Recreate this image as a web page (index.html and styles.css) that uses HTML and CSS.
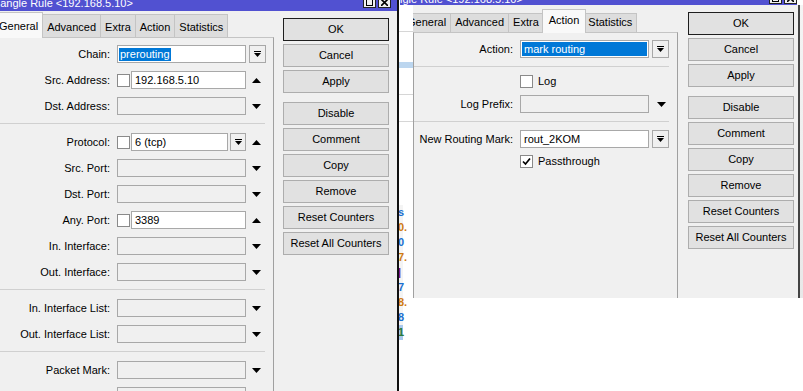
FILE: index.html
```html
<!DOCTYPE html>
<html lang="en">
<head>
  <meta charset="UTF-8" />
  <title>Mangle Rule &lt;192.168.5.10&gt;</title>
  <link rel="stylesheet" href="styles.css">
</head>
<body>
  <div class="screen">

    <!-- left window, General tab -->
    <div class="win win-left">
      <div class="titlebar">
        <span class="title">Mangle Rule &lt;192.168.5.10&gt;</span>
        <div class="tb-btns">
          <span class="tb-btn"><svg width="7" height="7" viewBox="0 0 7 7"><rect x="0.5" y="0.5" width="6" height="6" fill="none" stroke="#000"/></svg></span>
          <span class="tb-btn"><svg width="7" height="7" viewBox="0 0 7 7"><path d="M0 0L7 7M7 0L0 7" stroke="#000" stroke-width="1.6"/></svg></span>
        </div>
      </div>
      <div class="win-body">
        <div class="tabbox">
          <div class="tabs">
            <div class="tab active">General</div>
            <div class="tab">Advanced</div>
            <div class="tab">Extra</div>
            <div class="tab">Action</div>
            <div class="tab">Statistics</div>
          </div>
          <div class="panel">
            <div class="row">
              <div class="label">Chain:</div>
              <div class="ctrl"><div class="field on"><span class="sel">prerouting</span></div></div>
              <div class="aux"><div class="drop"><svg width="7" height="7" viewBox="0 0 7 7"><path d="M0 0h7v1H0zM0 2h7L3.5 6z"/></svg></div></div>
            </div>
            <div class="row">
              <div class="label">Src. Address:</div>
              <div class="ctrl"><span class="check"></span><div class="field on">192.168.5.10</div></div>
              <div class="aux"><svg width="9" height="5" viewBox="0 0 9 5"><path d="M4.5 0L9 5H0z"/></svg></div>
            </div>
            <div class="row">
              <div class="label">Dst. Address:</div>
              <div class="ctrl"><div class="field"></div></div>
              <div class="aux"><svg width="9" height="5" viewBox="0 0 9 5"><path d="M0 0h9L4.5 5z"/></svg></div>
            </div>
            <div class="sep"></div>
            <div class="row">
              <div class="label">Protocol:</div>
              <div class="ctrl">
                <span class="check"></span><div class="field on">6 (tcp)</div>
                <div class="drop"><svg width="7" height="7" viewBox="0 0 7 7"><path d="M0 0h7v1H0zM0 2h7L3.5 6z"/></svg></div>
              </div>
              <div class="aux"><svg width="9" height="5" viewBox="0 0 9 5"><path d="M4.5 0L9 5H0z"/></svg></div>
            </div>
            <div class="row">
              <div class="label">Src. Port:</div>
              <div class="ctrl"><div class="field"></div></div>
              <div class="aux"><svg width="9" height="5" viewBox="0 0 9 5"><path d="M0 0h9L4.5 5z"/></svg></div>
            </div>
            <div class="row">
              <div class="label">Dst. Port:</div>
              <div class="ctrl"><div class="field"></div></div>
              <div class="aux"><svg width="9" height="5" viewBox="0 0 9 5"><path d="M0 0h9L4.5 5z"/></svg></div>
            </div>
            <div class="row">
              <div class="label">Any. Port:</div>
              <div class="ctrl"><span class="check"></span><div class="field on">3389</div></div>
              <div class="aux"><svg width="9" height="5" viewBox="0 0 9 5"><path d="M4.5 0L9 5H0z"/></svg></div>
            </div>
            <div class="row">
              <div class="label">In. Interface:</div>
              <div class="ctrl"><div class="field"></div></div>
              <div class="aux"><svg width="9" height="5" viewBox="0 0 9 5"><path d="M0 0h9L4.5 5z"/></svg></div>
            </div>
            <div class="row">
              <div class="label">Out. Interface:</div>
              <div class="ctrl"><div class="field"></div></div>
              <div class="aux"><svg width="9" height="5" viewBox="0 0 9 5"><path d="M0 0h9L4.5 5z"/></svg></div>
            </div>
            <div class="sep"></div>
            <div class="row">
              <div class="label">In. Interface List:</div>
              <div class="ctrl"><div class="field"></div></div>
              <div class="aux"><svg width="9" height="5" viewBox="0 0 9 5"><path d="M0 0h9L4.5 5z"/></svg></div>
            </div>
            <div class="row">
              <div class="label">Out. Interface List:</div>
              <div class="ctrl"><div class="field"></div></div>
              <div class="aux"><svg width="9" height="5" viewBox="0 0 9 5"><path d="M0 0h9L4.5 5z"/></svg></div>
            </div>
            <div class="sep"></div>
            <div class="row">
              <div class="label">Packet Mark:</div>
              <div class="ctrl"><div class="field"></div></div>
              <div class="aux"><svg width="9" height="5" viewBox="0 0 9 5"><path d="M0 0h9L4.5 5z"/></svg></div>
            </div>
            <div class="row">
              <div class="label"></div>
              <div class="ctrl"><div class="field"></div></div>
            </div>
          </div>
        </div>
        <div class="buttons">
          <div class="btn default">OK</div>
          <div class="btn">Cancel</div>
          <div class="btn">Apply</div>
          <div class="btn group">Disable</div>
          <div class="btn">Comment</div>
          <div class="btn">Copy</div>
          <div class="btn">Remove</div>
          <div class="btn">Reset Counters</div>
          <div class="btn">Reset All Counters</div>
        </div>
      </div>
    </div>

    <div class="edge"></div>

    <!-- right window, Action tab -->
    <div class="right-area">
      <div class="titlebar title-right">
        <span class="title">Mangle Rule &lt;192.168.5.10&gt;</span>
        <div class="tb-btns">
          <span class="tb-btn"><svg width="7" height="7" viewBox="0 0 7 7"><rect x="0.5" y="0.5" width="6" height="6" fill="none" stroke="#000"/></svg></span>
          <span class="tb-btn"><svg width="7" height="7" viewBox="0 0 7 7"><path d="M0 0L7 7M7 0L0 7" stroke="#000" stroke-width="1.6"/></svg></span>
        </div>
      </div>
      <div class="right-row">
        <div class="behind">
          <div class="bh-line"></div>
          <div class="bh-sel"></div>
          <div class="bh-line"></div>
          <div class="bh-line"></div>
          <div class="bh-list">
            <span class="c1">s</span>
            <span class="c2">0.</span>
            <span class="c1">0</span>
            <span class="c2">7.</span>
            <span class="c3">|</span>
            <span class="c1">7</span>
            <span class="c2">8.</span>
            <span class="c1">8</span>
            <span class="c4">1</span>
          </div>
        </div>
        <div class="win win-right">
          <div class="tabbox">
            <div class="tabs">
              <div class="tab">General</div>
              <div class="tab">Advanced</div>
              <div class="tab">Extra</div>
              <div class="tab active">Action</div>
              <div class="tab">Statistics</div>
            </div>
            <div class="panel">
              <div class="row">
                <div class="label">Action:</div>
                <div class="ctrl"><div class="field on full"><span class="sel">mark routing</span></div></div>
                <div class="aux"><div class="drop"><svg width="7" height="7" viewBox="0 0 7 7"><path d="M0 0h7v1H0zM0 2h7L3.5 6z"/></svg></div></div>
              </div>
              <div class="sep"></div>
              <div class="row short">
                <div class="label"></div>
                <div class="ctrl"><span class="check"></span><span class="opt">Log</span></div>
              </div>
              <div class="row">
                <div class="label">Log Prefix:</div>
                <div class="ctrl"><div class="field"></div></div>
                <div class="aux wide"><svg width="9" height="5" viewBox="0 0 9 5"><path d="M0 0h9L4.5 5z"/></svg></div>
              </div>
              <div class="sep"></div>
              <div class="row">
                <div class="label">New Routing Mark:</div>
                <div class="ctrl"><div class="field on">rout_2KOM</div></div>
                <div class="aux"><div class="drop"><svg width="7" height="7" viewBox="0 0 7 7"><path d="M0 0h7v1H0zM0 2h7L3.5 6z"/></svg></div></div>
              </div>
              <div class="row short tight">
                <div class="label"></div>
                <div class="ctrl"><span class="check"><svg width="11" height="11" viewBox="0 0 11 11"><path d="M2 5.5l2.5 2.5L9 2.5" fill="none" stroke="#000" stroke-width="1.7"/></svg></span><span class="opt">Passthrough</span></div>
              </div>
            </div>
          </div>
          <div class="buttons">
            <div class="btn default">OK</div>
            <div class="btn">Cancel</div>
            <div class="btn">Apply</div>
            <div class="btn group">Disable</div>
            <div class="btn">Comment</div>
            <div class="btn">Copy</div>
            <div class="btn">Remove</div>
            <div class="btn">Reset Counters</div>
            <div class="btn">Reset All Counters</div>
          </div>
        </div>
        <div class="behind-end"></div>
      </div>
    </div>

  </div>
</body>
</html>
```

FILE: styles.css
```css
* {
  box-sizing: border-box;
}

body {
  margin: 0;
  background: #fff;
  font-family: "Liberation Sans", Arial, sans-serif;
  font-size: 11px;
  color: #000;
}

.screen {
  display: flex;
  width: 803px;
  height: 391px;
  overflow: hidden;
}

/* windows */

.win {
  background: #f0f0f0;
  overflow: hidden;
}

.win-left {
  width: 397px;
  flex: none;
  --label-w: 110px;
}

.edge {
  width: 2px;
  flex: none;
  background: #111;
}

.right-area {
  flex: 1;
  min-width: 0;
  display: flex;
  flex-direction: column;
}

.titlebar {
  display: flex;
  justify-content: space-between;
  height: 11px;
  flex: none;
  background: #5151d1;
  color: #fff;
  overflow: hidden;
}

.title {
  line-height: 12px;
  margin-top: -3px;
  margin-left: -9px;
  white-space: nowrap;
}

.tb-btns {
  display: flex;
  gap: 2px;
  margin-top: -4px;
  margin-right: 6px;
}

.tb-btn {
  display: flex;
  align-items: flex-end;
  justify-content: center;
  width: 13px;
  height: 12px;
  padding-bottom: 1px;
  background: #f0f0f0;
  border: 1px solid #222;
}

.title-right {
  height: 5px;
  width: 397px;
  margin-left: 1px;
}

.title-right .title {
  margin-top: -7px;
  margin-left: -19px;
}

.title-right .tb-btns {
  margin-top: -8px;
  margin-right: 0;
}

.win-body {
  display: flex;
}

/* tab control */

.tabbox {
  width: 274px;
  flex: none;
  display: flex;
  flex-direction: column;
}

.tabs {
  display: flex;
  align-items: flex-end;
  height: 26px;
  margin-left: -6px;
}

.tab {
  height: 23px;
  padding: 0 4px;
  line-height: 24px;
  background: #dddddd;
  border: 1px solid #c4c4c4;
  border-bottom: none;
  white-space: nowrap;
}

.tab + .tab {
  margin-left: -1px;
}

.tab.active {
  position: relative;
  z-index: 1;
  height: 26px;
  margin-bottom: -1px;
  line-height: 26px;
  background: #f9f9f9;
}

.panel {
  flex: 1;
  padding-top: 3px;
  background: #f0f0f0;
  border-top: 1px solid #c4c4c4;
  border-right: 1px solid #a0a0a0;
}

.row {
  display: flex;
  align-items: center;
  height: 26px;
}

.row.short {
  height: 20px;
}

.row.tight {
  height: 18px;
}

.label {
  width: var(--label-w);
  flex: none;
  text-align: right;
  white-space: nowrap;
}

.ctrl {
  display: flex;
  align-items: center;
  gap: 1px;
  width: 129px;
  height: 18px;
  margin-left: 7px;
  flex: none;
}

.field {
  flex: 1;
  min-width: 0;
  height: 18px;
  padding-left: 3px;
  line-height: 16px;
  background: #f0f0f0;
  border: 1px solid #a8a8a8;
  white-space: nowrap;
  overflow: hidden;
}

.field.on {
  background: #fff;
}

.field .sel {
  display: inline-block;
  margin-left: -2px;
  padding: 0 1px;
  line-height: 13px;
  background: #0078d7;
  color: #fff;
}

.field.full {
  padding: 1px;
}

.field.full .sel {
  display: block;
  margin: 0;
  padding-left: 2px;
  line-height: 14px;
}

.aux {
  display: flex;
  align-items: center;
  justify-content: center;
  width: 20px;
}

.aux.wide {
  width: 24px;
}

.drop {
  display: flex;
  align-items: center;
  justify-content: center;
  width: 17px;
  height: 18px;
  margin-left: 2px;
  background: #f0f0f0;
  border: 1px solid #a8a8a8;
  flex: none;
}

.ctrl .drop {
  width: 16px;
  margin-left: 1px;
}

.check {
  display: flex;
  align-items: center;
  justify-content: center;
  width: 13px;
  height: 13px;
  flex: none;
  background: #fff;
  border: 1px solid #8a8a8a;
}

.opt {
  margin-left: 4px;
}

.sep {
  height: 1px;
  margin: 4px 8px 5px 0;
  background: #d0d0d0;
}

/* button column */

.buttons {
  display: flex;
  flex-direction: column;
  gap: 3px;
  width: 106px;
  flex: none;
  margin-left: 9px;
  padding-top: 7px;
}

.btn {
  height: 23px;
  line-height: 21px;
  text-align: center;
  background: #e1e1e1;
  border: 1px solid #adadad;
}

.btn.default {
  border-color: #1e1e1e;
}

.btn.group {
  margin-top: 6px;
}

/* right side */

.right-row {
  flex: 1;
  display: flex;
  align-items: flex-start;
}

.behind {
  width: 14px;
  align-self: stretch;
  flex: none;
  background: #fff;
  overflow: hidden;
}

.bh-line {
  height: 1px;
  margin-top: 26px;
  background: #d6d6d6;
}

.bh-sel {
  height: 6px;
  margin-top: 30px;
  background: #bcd6ef;
}

.bh-list {
  display: flex;
  flex-direction: column;
  margin-top: 83px;
  margin-left: -1px;
  width: 5px;
  background: #f4f4f4;
  font-size: 11px;
  line-height: 15px;
  font-weight: bold;
}

.bh-list .c1 { color: #1a6fd0; }
.bh-list .c2 { color: #d07a10; }
.bh-list .c3 { color: #6a0a8a; }
.bh-list .c4 { color: #2a7a3a; background: #a9c9ee; }

.win-right {
  display: flex;
  width: 387px;
  height: 293px;
  flex: none;
  padding-right: 4px;
  border-right: 2px solid #444;
  --label-w: 99px;
}

.win-right .tabbox {
  width: 265px;
  overflow: hidden;
}

.win-right .tabs {
  height: 27px;
  margin-left: -14px;
}

.win-right .tab {
  height: 19px;
  line-height: 16px;
}

.win-right .tab:first-child {
  padding-left: 7px;
}

.win-right .tab.active {
  height: 24px;
  margin: 0 -2px -1px;
  padding: 0 6px;
  line-height: 20px;
}

.win-right .panel {
  border-left: 1px solid #a0a0a0;
  border-right: 1px solid #a0a0a0;
}

.win-right .sep {
  margin-bottom: 4px;
}

.win-right .buttons {
  margin-left: 10px;
}

.behind-end {
  flex: 1;
  height: 293px;
  background: linear-gradient(#f4f4f4, #e8e8e8);
}
```
